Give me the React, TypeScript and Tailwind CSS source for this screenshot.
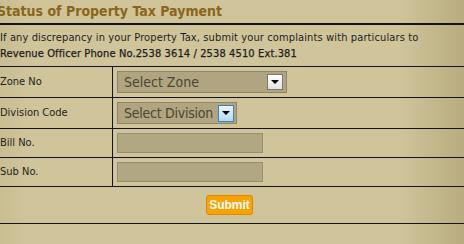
export default function App() {
  const rows = [
    { label: "Zone No", kind: "zone", h: "h-[31px]" },
    { label: "Division Code", kind: "division", h: "h-[31px]" },
    { label: "Bill No.", kind: "input", h: "h-[29px]" },
    { label: "Sub No.", kind: "input", h: "h-[29px]" },
  ];

  return (
    <div className="w-[464px] h-[244px] overflow-hidden bg-[linear-gradient(90deg,#c9be92_0%,#cfc49a_6%,#cfc49a_86%,#b8ac80_100%)] text-[#1e1e1e] [font-family:'DejaVu_Sans_Condensed','DejaVu_Sans',sans-serif]">
      <h1 className="h-[23px] -ml-[3px] pt-[1px] text-[14px] font-bold leading-[20px] text-[#8a651a] whitespace-nowrap">
        Status of Property Tax Payment
      </h1>
      <div className="border-t-2 border-[#141414]" />
      <div className="pt-[5px] text-[11px] leading-[16px] tracking-[0.12px] whitespace-nowrap">
        <p>If any discrepancy in your Property Tax, submit your complaints with particulars to</p>
        <p className="[-webkit-text-stroke:0.25px_#1e1e1e]">Revenue Officer Phone No.2538 3614 / 2538 4510 Ext.381</p>
      </div>

      <div className="mt-[4px] border-t border-[#141414] w-[480px]">
        {rows.map((r) => (
          <div key={r.label} className={`flex ${r.h} border-b border-[#141414]`}>
            <div className="w-[113px] shrink-0 border-r border-[#141414] flex items-center text-[11px]">
              {r.label}
            </div>
            <div className="flex items-center pl-[4px]">
              {r.kind === "zone" && (
                <div className="w-[170px] h-[22px] bg-[#b0a580] border border-[#8f8666] flex items-center justify-between pl-[6px] pr-[3px]">
                  <span className="text-[14px] text-[#4b4535] leading-none whitespace-nowrap">Select Zone</span>
                  <span className="w-[16px] h-[16px] border border-[#7a7a7a] bg-[linear-gradient(#ffffff,#e2e2e2)] flex items-center justify-center">
                    <span className="w-0 h-0 border-l-[4px] border-r-[4px] border-t-[4px] border-l-transparent border-r-transparent border-t-black" />
                  </span>
                </div>
              )}
              {r.kind === "division" && (
                <div className="w-[120px] h-[22px] bg-[#b0a580] border border-[#8f8666] flex items-center justify-between pl-[6px] pr-[2px]">
                  <span className="text-[14px] tracking-[-0.25px] text-[#4b4535] leading-none whitespace-nowrap">Select Division</span>
                  <span className="w-[16px] h-[17px] shrink-0 border border-[#3d80b8] bg-[linear-gradient(#eaf5fd,#b4dbf6)] flex items-center justify-center">
                    <span className="w-0 h-0 border-l-[4px] border-r-[4px] border-t-[4px] border-l-transparent border-r-transparent border-t-black" />
                  </span>
                </div>
              )}
              {r.kind === "input" && (
                <div className="w-[146px] h-[20px] bg-[#b1a783] border border-[#978e6f]" />
              )}
            </div>
          </div>
        ))}
        <div className="h-[37px] border-b border-[#141414] flex items-center pl-[206px]">
          <button className="w-[47px] h-[20px] rounded-[3px] bg-[#f9a200] border border-[#d88a00] text-white text-[12px] font-bold leading-none [font-family:'Liberation_Sans',Arial,sans-serif]">
            Submit
          </button>
        </div>
      </div>
    </div>
  );
}
